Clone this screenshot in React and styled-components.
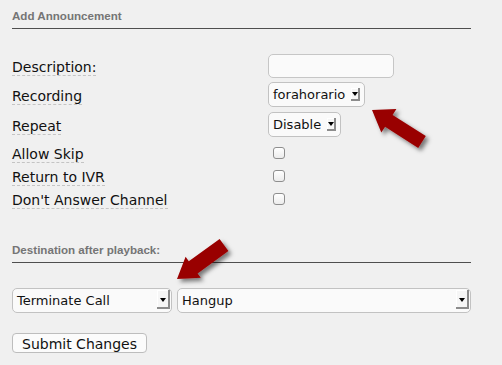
import React from 'react';
import styled, { createGlobalStyle } from 'styled-components';

const Global = createGlobalStyle`
  html, body { margin: 0; padding: 0; background: #f0f0f0; }
  body { font-family: "DejaVu Sans", Verdana, sans-serif; color: #111; }
`;

const Page = styled.div`
  position: relative;
  width: 459px;
  height: 365px;
  padding: 9px 12px 0;
`;

const SectionTitle = styled.div`
  font-family: "Liberation Sans", Arial, sans-serif;
  font-weight: bold;
  font-size: 11.6px;
  line-height: 14px;
  color: #757575;
  padding-bottom: 5px;
  border-bottom: 1px solid #4e4e4e;
  margin-top: ${p => p.$top || 0}px;
`;

const Rows = styled.div`
  display: flex;
  flex-direction: column;
  margin-top: 25px;
`;

const Row = styled.div`
  display: grid;
  grid-template-columns: 256px auto;
  align-items: center;
  height: ${p => p.$h}px;
  margin-top: ${p => p.$gap || 0}px;
`;

const Label = styled.span`
  justify-self: start;
  font-size: 14px;
  line-height: 16px;
  padding-top: 3px;
  border-bottom: 1px dashed #c4c4c4;
`;

const Control = styled.div`
  display: flex;
  align-items: center;
`;

const TextInput = styled.input`
  box-sizing: border-box;
  width: 126px;
  height: 24px;
  border: 1px solid #c6c6c6;
  border-radius: 5px;
  background: #fafafa;
  outline: none;
  margin: 0;
`;

const SelectBox = styled.div`
  box-sizing: border-box;
  display: flex;
  align-items: ${p => (p.$wide ? 'flex-start' : 'center')};
  height: 25px;
  width: ${p => (p.$w ? `${p.$w}px` : 'auto')};
  border: 1px solid #c2c2c2;
  border-radius: 5px;
  background: #fafafa;
  padding-left: 4px;
  padding-right: ${p => (p.$wide ? 1 : 4)}px;
  font-size: 13px;
  color: #111;
`;

const SelectText = styled.span`
  flex: ${p => (p.$wide ? 1 : 'none')};
  padding-right: 6px;
  line-height: 24px;
  white-space: nowrap;
`;

const ArrowBox = styled.span`
  position: relative;
  box-sizing: border-box;
  width: ${p => p.$w}px;
  height: ${p => p.$h}px;
  margin-top: ${p => p.$mt || 0}px;
  background: #f6f6f6;
  box-shadow: inset -2px -2px 0 #8c8c8c, inset 1px 1px 0 #ffffff;
  &::after {
    content: '';
    position: absolute;
    left: 50%;
    top: ${p => p.$tri}px;
    margin-left: -4px;
    border-left: 3px solid transparent;
    border-right: 3px solid transparent;
    border-top: 4px solid #000;
  }
`;

const Check = styled.input.attrs({ type: 'checkbox' })`
  appearance: none;
  -webkit-appearance: none;
  box-sizing: border-box;
  width: 12px;
  height: 12px;
  margin: 0 0 0 5px;
  border: 1px solid #8e8e8e;
  border-radius: 3px;
  background: linear-gradient(#ffffff, #ececec);
`;

const DestRow = styled.div`
  display: flex;
  gap: 5px;
  margin-top: 25px;
`;

const Button = styled.button`
  box-sizing: border-box;
  margin-top: 20px;
  height: 20px;
  width: 135px;
  padding: 1px 0 0 9px;
  text-align: left;
  font-family: "DejaVu Sans", Verdana, sans-serif;
  font-size: 14px;
  line-height: 18px;
  color: #111;
  background: #fbfbfb;
  border: 1px solid #bdbdbd;
  border-radius: 4px;
`;

const Overlay = styled.svg`
  position: absolute;
  left: 0;
  top: 0;
  pointer-events: none;
`;

function arrowPoints(tx, ty, bx, by, headLen, headHalf, shaftHalf) {
  const dx = tx - bx;
  const dy = ty - by;
  const L = Math.hypot(dx, dy);
  const ux = dx / L;
  const uy = dy / L;
  const nx = -uy;
  const ny = ux;
  const hx = tx - ux * headLen;
  const hy = ty - uy * headLen;
  const pts = [
    [tx, ty],
    [hx + nx * headHalf, hy + ny * headHalf],
    [hx + nx * shaftHalf, hy + ny * shaftHalf],
    [bx + nx * shaftHalf, by + ny * shaftHalf],
    [bx - nx * shaftHalf, by - ny * shaftHalf],
    [hx - nx * shaftHalf, hy - ny * shaftHalf],
    [hx - nx * headHalf, hy - ny * headHalf],
  ];
  return pts.map(p => `${p[0].toFixed(1)},${p[1].toFixed(1)}`).join(' ');
}

const ARROWS = [
  arrowPoints(372, 110, 422, 142, 20, 14, 7),
  arrowPoints(177, 279, 224, 245, 20, 13, 7.5),
];

function Select({ value, wide, w }) {
  return (
    <SelectBox $wide={wide} $w={w}>
      <SelectText $wide={wide}>{value}</SelectText>
      {wide ? (
        <ArrowBox $w={13} $h={19} $mt={1} $tri={8} />
      ) : (
        <ArrowBox $w={9} $h={13} $tri={4} />
      )}
    </SelectBox>
  );
}

export default function App() {
  return (
    <Page>
      <Global />
      <SectionTitle>Add Announcement</SectionTitle>
      <Rows>
        <Row $h={24}>
          <Label>Description:</Label>
          <Control><TextInput type="text" /></Control>
        </Row>
        <Row $h={25} $gap={4}>
          <Label>Recording</Label>
          <Control><Select value="forahorario" /></Control>
        </Row>
        <Row $h={25} $gap={5}>
          <Label>Repeat</Label>
          <Control><Select value="Disable" /></Control>
        </Row>
        <Row $h={23} $gap={4}>
          <Label>Allow Skip</Label>
          <Control><Check /></Control>
        </Row>
        <Row $h={23}>
          <Label>Return to IVR</Label>
          <Control><Check /></Control>
        </Row>
        <Row $h={23}>
          <Label>Don't Answer Channel</Label>
          <Control><Check /></Control>
        </Row>
      </Rows>
      <SectionTitle $top={33}>Destination after playback:</SectionTitle>
      <DestRow>
        <Select value="Terminate Call" wide w={160} />
        <Select value="Hangup" wide w={294} />
      </DestRow>
      <Button type="button">Submit Changes</Button>
      <Overlay width="502" height="365" viewBox="0 0 502 365">
        <defs>
          <filter id="arrowShadow" x="-30%" y="-30%" width="160%" height="160%">
            <feDropShadow dx="3" dy="3" stdDeviation="2" floodColor="#000" floodOpacity="0.5" />
          </filter>
        </defs>
        {ARROWS.map((pts, i) => (
          <polygon key={i} points={pts} fill="#990000" filter="url(#arrowShadow)" />
        ))}
      </Overlay>
    </Page>
  );
}
